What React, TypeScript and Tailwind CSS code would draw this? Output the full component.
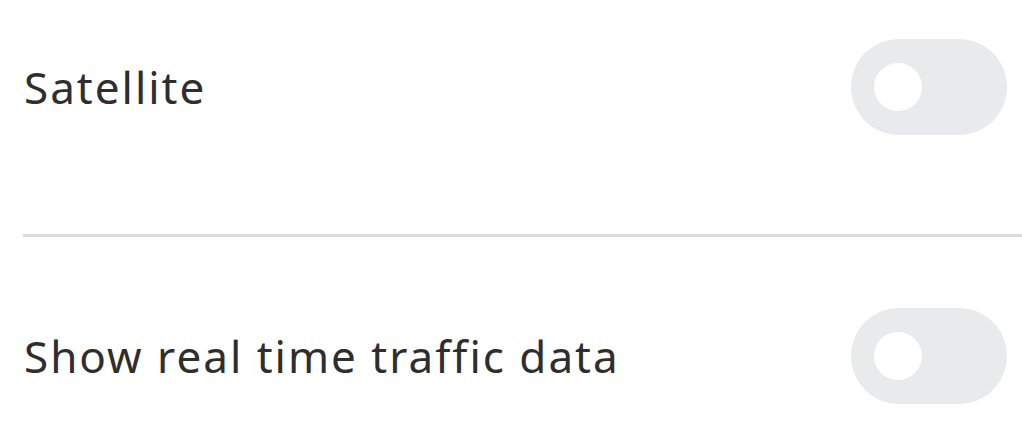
import { useState } from 'react'

const Toggle = ({ on, onChange }: { on: boolean; onChange: () => void }) => {
  return (
    <button
      type="button"
      onClick={onChange}
      className={`flex h-[96px] w-[156px] shrink-0 items-center rounded-full px-[23px] ${on ? 'justify-end bg-[#fc3f1d]' : 'justify-start bg-[#e9eaeb]'}`}
    >
      <span className="block h-[48px] w-[48px] rounded-full bg-white" />
    </button>
  )
}

const App = () => {
  const [satellite, setSatellite] = useState(false)
  const [traffic, setTraffic] = useState(false)

  return (
    <div className="flex flex-col bg-white font-['Noto_Sans',sans-serif] text-[#2e2e2e]">
      <div className="flex h-[174px] items-center justify-between pl-[24px] pr-[15px]">
        <span className="text-[44px] leading-none tracking-[2px]">Satellite</span>
        <Toggle on={satellite} onChange={() => setSatellite(!satellite)} />
      </div>
      <div className="ml-[23px] mt-[60px] h-[3px] bg-[#dcdcdc]" />
      <div className="flex items-center justify-between pl-[24px] pr-[15px] pt-[71px]">
        <span className="text-[44px] leading-none tracking-[2px]">Show real time traffic data</span>
        <Toggle on={traffic} onChange={() => setTraffic(!traffic)} />
      </div>
    </div>
  )
}

export default App
